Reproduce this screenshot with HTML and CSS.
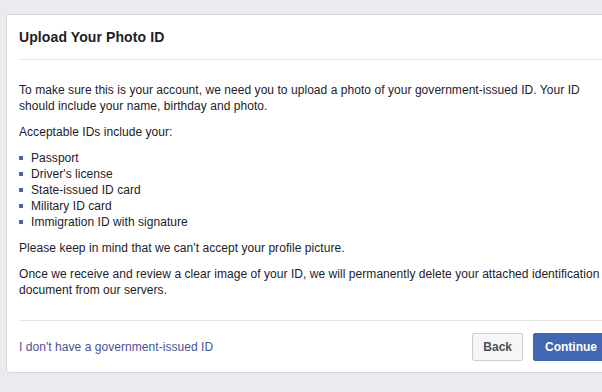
FILE: index.html
```html
<!DOCTYPE html>
<html lang="en">
<head>
    <meta charset="UTF-8">
    <meta name="viewport" content="width=device-width, initial-scale=1.0">
    <title>Upload Your Photo ID</title>
    <link rel="stylesheet" href="styles.css">
</head>
<body>
    <div class="dialog">
        <!-- Header -->
        <div class="dialog-header">
            <h1>Upload Your Photo ID</h1>
        </div>

        <!-- Body -->
        <div class="dialog-body">
            <p>To make sure this is your account, we need you to upload a photo of your government-issued ID. Your ID should include your name, birthday and photo.</p>
            <p>Acceptable IDs include your:</p>
            <ul class="id-list">
                <li>Passport</li>
                <li>Driver's license</li>
                <li>State-issued ID card</li>
                <li>Military ID card</li>
                <li>Immigration ID with signature</li>
            </ul>
            <p>Please keep in mind that we can't accept your profile picture.</p>
            <p>Once we receive and review a clear image of your ID, we will permanently delete your attached identification document from our servers.</p>
        </div>

        <!-- Footer -->
        <div class="dialog-footer">
            <a href="#" class="no-id-link">I don't have a government-issued ID</a>
            <div class="buttons">
                <button class="btn btn-back">Back</button>
                <button class="btn btn-continue">Continue</button>
            </div>
        </div>
    </div>
</body>
</html>
```

FILE: styles.css
```css
html {
    overflow: hidden;
}

body {
    margin: 0;
    padding: 14px 0 0 6px;
    background-color: #e9ebee;
    font-family: "Liberation Sans", Arial, sans-serif;
    font-size: 12px;
    line-height: 16px;
    letter-spacing: 0.05px;
    color: #1d2129;
}

.dialog {
    width: 616px;
    background-color: #fff;
    border: 1px solid #d6d8dc;
    border-radius: 3px;
    box-sizing: border-box;
}

.dialog-header {
    margin: 0 12px;
    padding: 13px 0 12px;
    border-bottom: 1px solid #e2e4e7;
}

.dialog-header h1 {
    margin: 0;
    font-size: 14px;
    line-height: 19px;
    font-weight: bold;
    letter-spacing: 0.1px;
    color: #1d2129;
}

.dialog-body {
    margin: 0 12px;
    padding: 22px 0 22px;
}

.dialog-body p {
    margin: 0 0 10px;
}

.dialog-body p:last-child {
    margin-bottom: 0;
}

.id-list {
    list-style: none;
    margin: 0 0 10px;
    padding: 0;
}

.id-list li {
    display: flex;
    align-items: center;
    gap: 8px;
}

.id-list li::before {
    content: "";
    width: 4px;
    height: 4px;
    background-color: #4a64a8;
    flex-shrink: 0;
}

.dialog-footer {
    margin: 0 12px;
    padding: 12px 0 11px;
    border-top: 1px solid #e2e4e7;
    display: flex;
    justify-content: space-between;
    align-items: center;
}

.no-id-link {
    color: #4b5196;
    text-decoration: none;
}

.buttons {
    display: flex;
    gap: 10px;
}

.btn {
    height: 28px;
    padding: 0 10px;
    font-family: "Liberation Sans", Arial, sans-serif;
    font-size: 12px;
    font-weight: bold;
    border-radius: 2px;
    cursor: pointer;
}

.btn-back {
    background-color: #f5f6f7;
    border: 1px solid #ccd0d5;
    color: #4b4f56;
}

.btn-continue {
    background-color: #4267b2;
    border: 1px solid #4267b2;
    color: #fff;
    padding: 0 11px;
}
```
